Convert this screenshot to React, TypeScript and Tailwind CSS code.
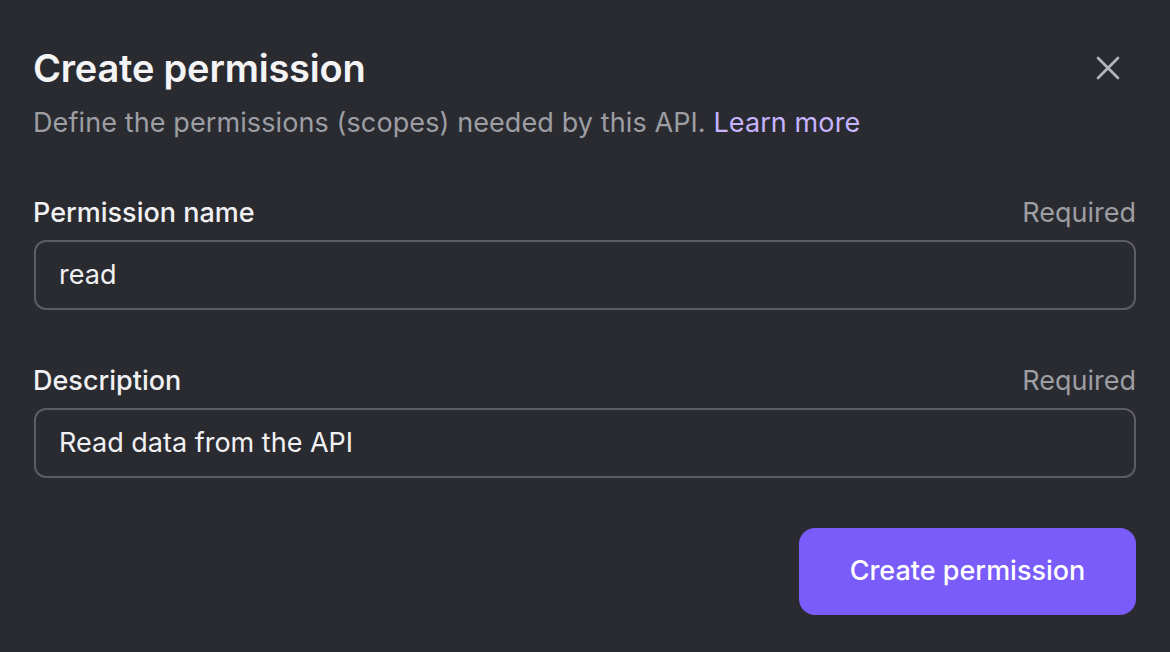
import { X } from 'lucide-react'

export default function App() {
  return (
    <div className="w-[1170px] h-[652px] bg-[#2a2b30] text-white px-[34px] pt-[42px]" style={{ fontFamily: 'Inter, "Noto Sans", sans-serif' }}>
      {/* Header */}
      <div className="flex items-start justify-between">
        <div>
          <h1 className="text-[38px] leading-[52px] font-semibold text-[#f4f4f6] tracking-[-0.2px] -ml-[1px]">Create permission</h1>
          <p className="text-[27px] leading-[36px] text-[#9d9ea4] mt-[11px] -ml-[1px] tracking-[0.1px]">
            Define the permissions (scopes) needed by this API.{' '}
            <span className="text-[#c7b4ff]">Learn more</span>
          </p>
        </div>
        <button className="mt-[6px] mr-[8px] text-[#b5b6bb]">
          <X className="w-[40px] h-[40px]" strokeWidth={1.6} />
        </button>
      </div>

      {/* Permission name */}
      <div className="mt-[54px]">
        <div className="flex items-center justify-between">
          <span className="text-[27px] leading-[36px] font-medium text-[#f1f1f3] -ml-[1px]">Permission name</span>
          <span className="text-[27px] leading-[36px] text-[#9d9ea4]">Required</span>
        </div>
        <div className="mt-[9px] h-[70px] rounded-[12px] border-2 border-[#5c5d63] flex items-center px-[23px]">
          <span className="text-[27px] text-[#f1f1f3]">read</span>
        </div>
      </div>

      {/* Description */}
      <div className="mt-[53px]">
        <div className="flex items-center justify-between">
          <span className="text-[27px] leading-[36px] font-medium text-[#f1f1f3] -ml-[1px]">Description</span>
          <span className="text-[27px] leading-[36px] text-[#9d9ea4]">Required</span>
        </div>
        <div className="mt-[9px] h-[70px] rounded-[12px] border-2 border-[#5c5d63] flex items-center px-[23px]">
          <span className="text-[27px] text-[#f1f1f3]">Read data from the API</span>
        </div>
      </div>

      {/* Footer */}
      <div className="flex justify-end mt-[50px]">
        <button className="h-[87px] w-[337px] rounded-[16px] bg-[#7a5cfa] text-[27px] font-medium text-white">
          Create permission
        </button>
      </div>
    </div>
  )
}
